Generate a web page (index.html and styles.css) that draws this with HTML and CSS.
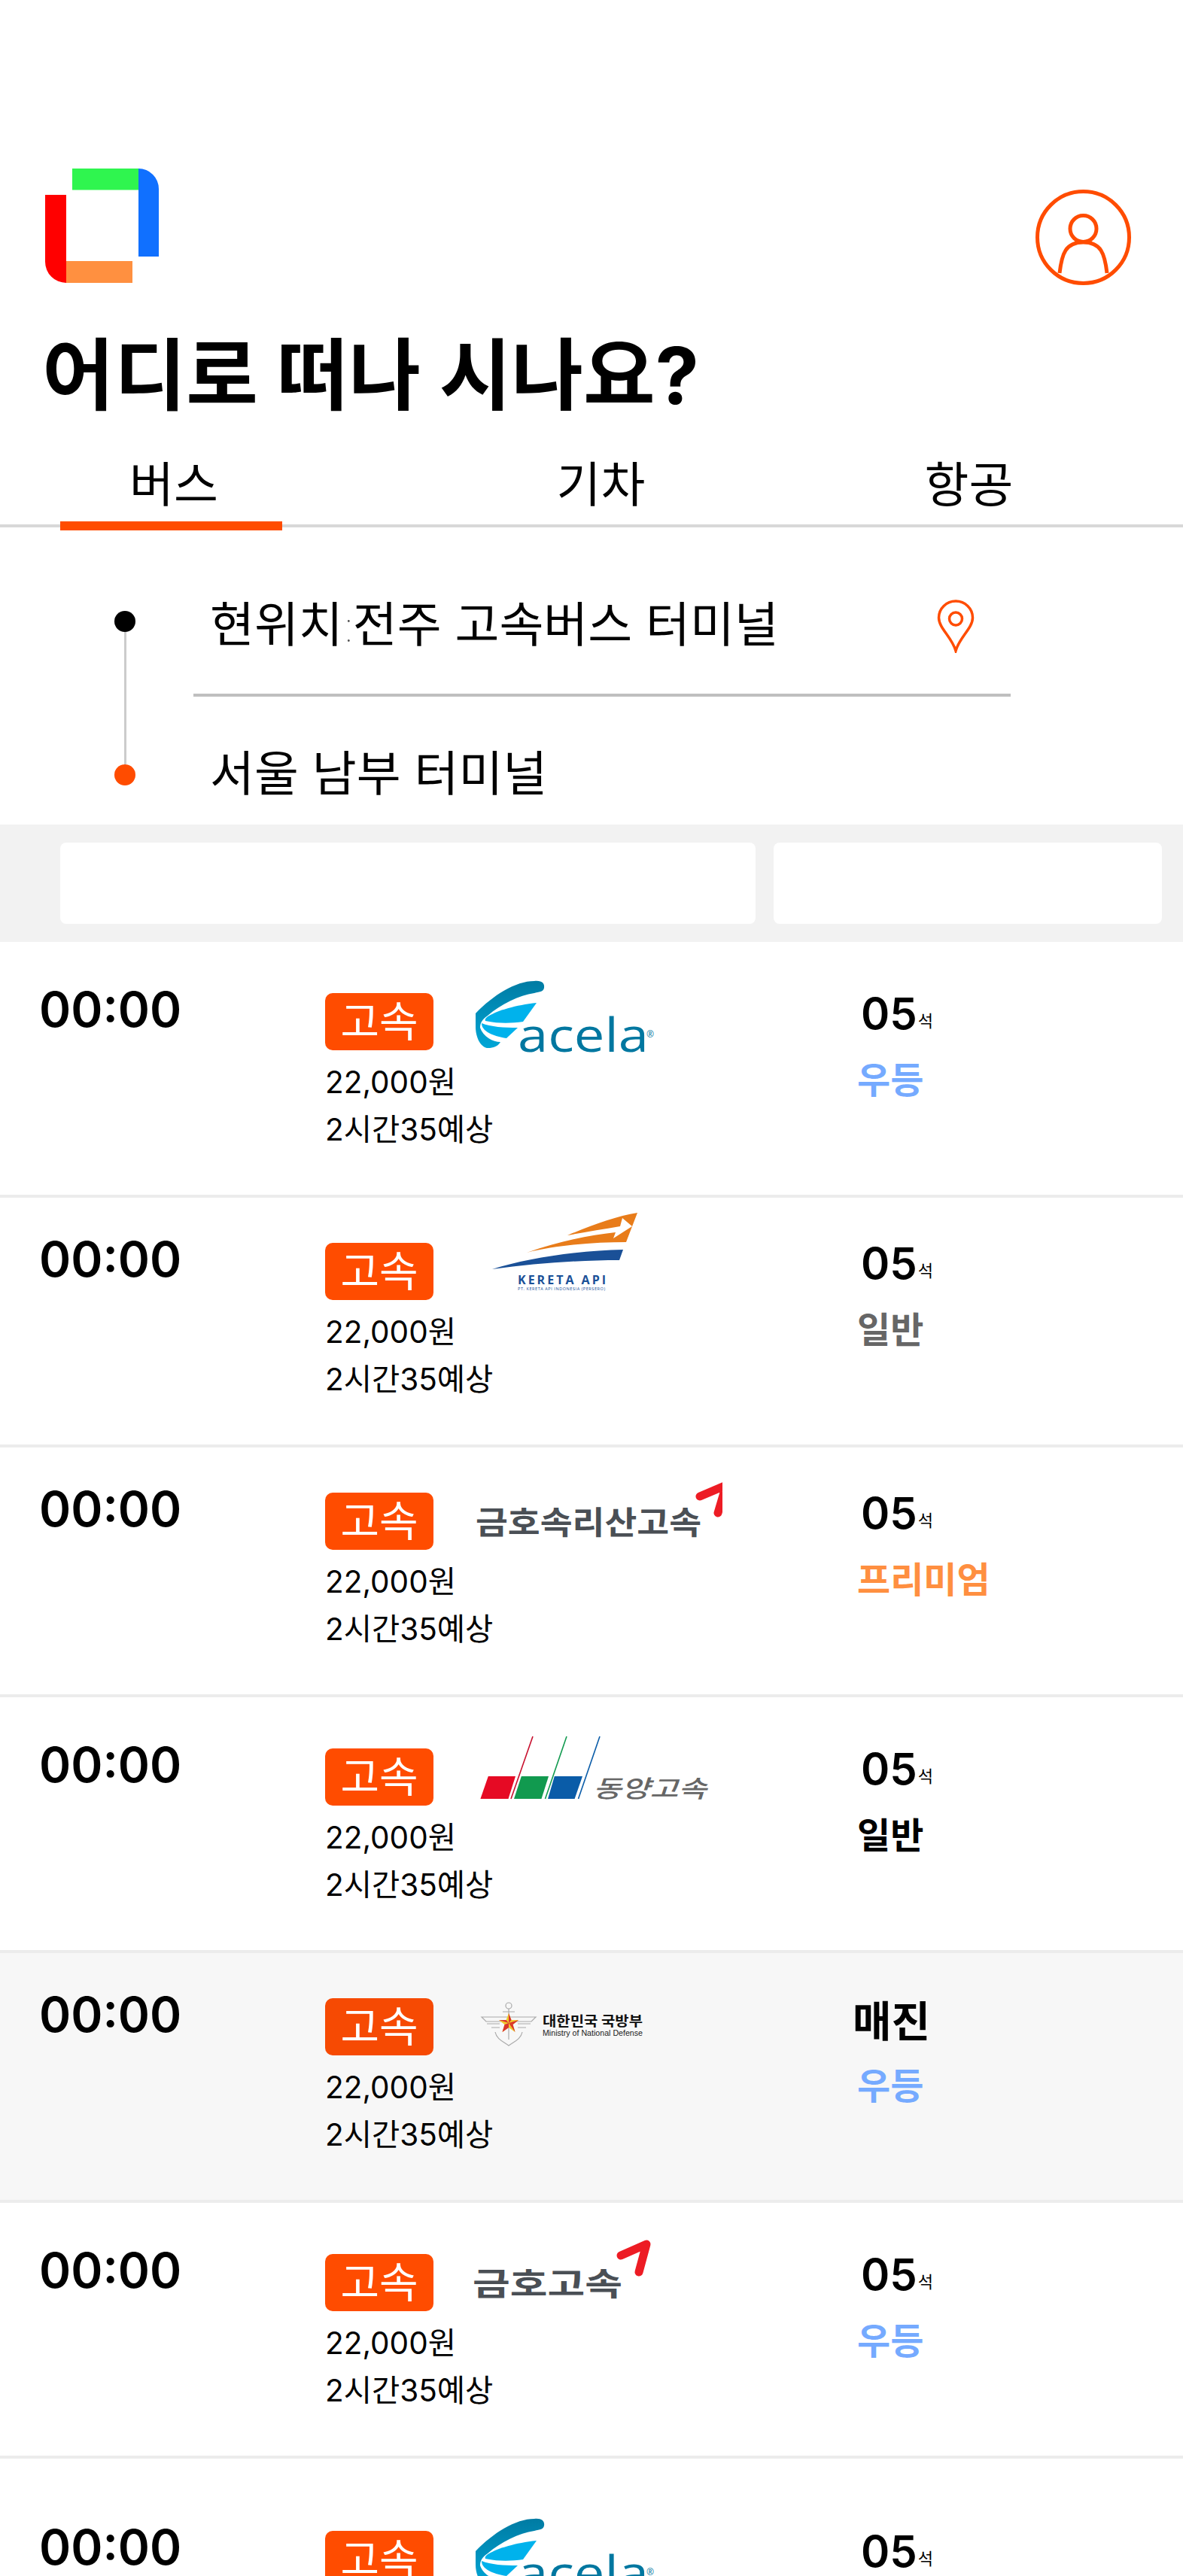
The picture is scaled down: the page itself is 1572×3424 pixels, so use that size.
FILE: index.html
```html
<!DOCTYPE html>
<html lang="ko">

<head>
  <meta charset="UTF-8" />
  <title>어디로 떠나 시나요?</title>
  <link rel="stylesheet" href="styles.css">
</head>

<body>
  <svg class="defs" width="0" height="0">
    <defs>
      <linearGradient id="wingGrad" x1="0" y1="0" x2="0" y2="1">
        <stop offset="0" stop-color="#007ba3" />
        <stop offset="1" stop-color="#00a6d6" />
      </linearGradient>
      <g id="acela">
        <path fill="url(#wingGrad)" d="M12 72 C35 48 65 29 90 29 C100 28 104 32 103 38 C102 43 98 43 90 45 C70 48 45 60 28 75 C20 80 18 86 18 91 C22 103 35 110 45 110 C40 118 32 118 27 118 C18 116 12 103 12 90 Z" />
        <path fill="#00b2ec" d="M93 58 C65 61 42 68 30 75 C25 78 24 80 25 82 C45 86 60 85 75 83 Z" />
        <path fill="#00b2ec" d="M68 91 C50 91 32 90 20 85 C20 96 35 102 53 105 Z" />
        <text class="logo-acela" x="68" y="123" textLength="174" lengthAdjust="spacingAndGlyphs">acela</text>
        <text class="logo-acela-r" x="239" y="104">®</text>
      </g>
    </defs>
  </svg>

  <header class="top">
    <svg class="brand" viewBox="0 0 151 152">
      <rect x="36" y="0" width="88" height="28.5" fill="#2ff54f" />
      <path d="M124 0 A27 27 0 0 1 151 27 V117 H124 Z" fill="#1070ff" />
      <path d="M0 35 H28 V152 A28 28 0 0 1 0 124 Z" fill="#ff0000" />
      <rect x="28" y="123" width="88" height="29" fill="#ff9040" />
    </svg>
    <svg class="avatar" viewBox="0 0 127 127" fill="none" stroke="#ff4c00">
      <circle cx="63.5" cy="63.5" r="61" stroke-width="5" />
      <circle cx="63.5" cy="52" r="17.5" stroke-width="5" />
      <path d="M32 111 C35 85 40 70 63.5 70 C87 70 92 85 95 111" stroke-width="5" />
    </svg>
  </header>

  <h1 class="title">어디로 떠나 시나요?</h1>

  <nav class="tabs">
    <a class="tab tab-on">버스</a>
    <a class="tab tab-train">기차</a>
    <a class="tab tab-air">항공</a>
  </nav>

  <section class="route">
    <div class="route-line">
      <span class="dot"></span>
      <span class="line"></span>
      <span class="dot dot-end"></span>
    </div>
    <div class="route-fields">
      <div class="field field-from">
        <span>현위치<span class="sep">:</span>전주 고속버스 터미널</span>
        <svg class="pin" viewBox="0 0 50 71" fill="none" stroke="#ff4c00" stroke-width="3.5">
          <path d="M25 68 C20 50 2.5 38 2.5 24 A22.5 22 0 0 1 47.5 24 C47.5 38 30 50 25 68 Z" />
          <circle cx="25" cy="25.5" r="8.5" />
        </svg>
      </div>
      <div class="field field-to">서울 남부 터미널</div>
    </div>
  </section>

  <section class="filters">
    <div class="filter filter-wide"></div>
    <div class="filter filter-narrow"></div>
  </section>

  <main class="list">

    <article class="row row-tall">
      <div class="time">00:00</div>
      <div class="mid">
        <div class="mid-top">
          <span class="badge">고속</span>
          <svg class="logo" viewBox="0 0 340 166"><use href="#acela" /></svg>
        </div>
        <div class="info">22,000원</div>
        <div class="info">2시간35예상</div>
      </div>
      <div class="side">
        <div class="seats">05<small>석</small></div>
        <div class="grade grade-blue">우등</div>
      </div>
    </article>

    <article class="row">
      <div class="time">00:00</div>
      <div class="mid">
        <div class="mid-top">
          <span class="badge">고속</span>
          <svg class="logo" viewBox="0 0 340 166">
            <path fill="#e87c1a" d="M134 35 C165 22 200 9 227 5 L212 44 C170 44 120 48 80 58 C120 44 160 35 198 31 L195 39 L220 23 L207 12 L204 23 C180 27 155 31 134 35 Z" />
            <path fill="#1a5097" d="M208 54 C150 55 80 65 34 80 C90 72 150 68 203 68 Z" />
            <text class="logo-kereta" x="68" y="100" textLength="117">KERETA API</text>
            <text class="logo-kereta-sub" x="68" y="108" textLength="116">PT. KERETA API INDONESIA (PERSERO)</text>
          </svg>
        </div>
        <div class="info">22,000원</div>
        <div class="info">2시간35예상</div>
      </div>
      <div class="side">
        <div class="seats">05<small>석</small></div>
        <div class="grade grade-gray">일반</div>
      </div>
    </article>

    <article class="row">
      <div class="time">00:00</div>
      <div class="mid">
        <div class="mid-top">
          <span class="badge">고속</span>
          <svg class="logo" viewBox="0 0 340 166">
            <text class="logo-kumho" x="12" y="100" textLength="300" lengthAdjust="spacingAndGlyphs">금호속리산고속</text>
            <path class="logo-arrow" d="M310 50 L345 35 L334 72" />
          </svg>
        </div>
        <div class="info">22,000원</div>
        <div class="info">2시간35예상</div>
      </div>
      <div class="side">
        <div class="seats">05<small>석</small></div>
        <div class="grade grade-orange">프리미엄</div>
      </div>
    </article>

    <article class="row row-tall">
      <div class="time">00:00</div>
      <div class="mid">
        <div class="mid-top">
          <span class="badge">고속</span>
          <svg class="logo" viewBox="0 0 340 166">
            <polygon fill="#e60a24" points="28.8,82 65,82 55.5,112 18.4,112" />
            <polygon fill="#119a4f" points="72.8,82 109,82 99.5,112 63,112" />
            <polygon fill="#0a5ca8" points="116.8,82 154,82 143.6,112 108,112" />
            <line x1="88" y1="29" x2="59" y2="112" stroke="#c8102e" stroke-width="1.6" />
            <line x1="133" y1="29" x2="104.5" y2="112" stroke="#119a4f" stroke-width="1.6" />
            <line x1="177" y1="29" x2="148.5" y2="112" stroke="#0a5ca8" stroke-width="1.6" />
            <text class="logo-dongyang" x="168" y="110" textLength="151" lengthAdjust="spacingAndGlyphs">동양고속</text>
          </svg>
        </div>
        <div class="info">22,000원</div>
        <div class="info">2시간35예상</div>
      </div>
      <div class="side">
        <div class="seats">05<small>석</small></div>
        <div class="grade">일반</div>
      </div>
    </article>

    <article class="row row-sold">
      <div class="time">00:00</div>
      <div class="mid">
        <div class="mid-top">
          <span class="badge">고속</span>
          <svg class="logo" viewBox="0 0 340 166">
            <g fill="none" stroke="#aaa" stroke-width="1.2">
              <circle cx="56" cy="55" r="4" />
              <path d="M56 59 V100 M48 63 H64 M38 90 C40 100 50 103 56 108 C62 103 72 100 74 90" />
              <path d="M20 70 H92 L86 76 H26 Z M27 79 H44 M85 79 H68 M33 84 H44 M79 84 H68" />
            </g>
            <polygon fill="#f0c92c" points="56,65 59.5,74 69,74 61.5,80 64.5,90 56,84 47.5,90 50.5,80 43,74 52.5,74" />
            <polygon fill="#d9342b" points="56,65 59.5,74 56,78" />
            <polygon fill="#d9342b" points="56,78 69,74 61.5,80" />
            <polygon fill="#d9342b" points="56,78 61.5,80 64.5,90" />
            <polygon fill="#d9342b" points="56,78 56,84 47.5,90 50.5,80" />
            <polygon fill="#d9342b" points="56,78 43,74 52.5,74" />
            <text class="logo-mnd" x="101" y="82" textLength="133" lengthAdjust="spacingAndGlyphs">대한민국 국방부</text>
            <text class="logo-mnd-en" x="101" y="95" textLength="133" lengthAdjust="spacingAndGlyphs">Ministry of National Defense</text>
          </svg>
        </div>
        <div class="info">22,000원</div>
        <div class="info">2시간35예상</div>
      </div>
      <div class="side">
        <div class="sold">매진</div>
        <div class="grade grade-blue">우등</div>
      </div>
    </article>

    <article class="row row-tall">
      <div class="time">00:00</div>
      <div class="mid">
        <div class="mid-top">
          <span class="badge">고속</span>
          <svg class="logo" viewBox="0 0 340 166">
            <text class="logo-kumho" x="8" y="100" textLength="199" lengthAdjust="spacingAndGlyphs">금호고속</text>
            <path class="logo-arrow" d="M205 47 L239 32 L229 69" />
          </svg>
        </div>
        <div class="info">22,000원</div>
        <div class="info">2시간35예상</div>
      </div>
      <div class="side">
        <div class="seats">05<small>석</small></div>
        <div class="grade grade-blue">우등</div>
      </div>
    </article>

    <article class="row row-last">
      <div class="time">00:00</div>
      <div class="mid">
        <div class="mid-top">
          <span class="badge">고속</span>
          <svg class="logo" viewBox="0 0 340 166"><use href="#acela" /></svg>
        </div>
      </div>
      <div class="side">
        <div class="seats">05<small>석</small></div>
      </div>
    </article>

  </main>
</body>

</html>
```

FILE: styles.css
```css
* {
  box-sizing: border-box;
}

html,
body {
  height: 3424px;
  overflow: hidden;
}

body {
  margin: 0;
  background-color: #ffffff;
  color: #000000;
  font-family: Inter, "Noto Sans CJK KR", sans-serif;
}

.defs {
  display: block;
  height: 0;
}

/* header */
.top {
  display: flex;
  justify-content: space-between;
  align-items: flex-start;
  padding: 224px 69px 0 60px;
}

.brand {
  width: 151px;
  height: 152px;
}

.avatar {
  width: 127px;
  height: 127px;
  margin-top: 28px;
}

.title {
  margin: 60px 0 0 56px;
  font-size: 104px;
  font-weight: 700;
  line-height: 120px;
}

/* tabs */
.tabs {
  display: flex;
  height: 142px;
  padding: 45px 0 0 80px;
  border-bottom: 4px solid #d8d8d8;
}

.tab {
  position: relative;
  width: 295px;
  height: 80px;
  font-size: 64px;
  line-height: 80px;
  text-align: center;
}

.tab-on {
  padding-left: 7px;
}

.tab-on::after {
  content: "";
  position: absolute;
  left: 0;
  right: 0;
  top: 89px;
  height: 12px;
  background-color: #ff4c00;
}

.tab-train {
  margin-left: 276px;
}

.tab-air {
  margin-left: 194px;
}

/* route */
.route {
  display: flex;
  height: 395px;
  padding-left: 152px;
}

.route-line {
  display: flex;
  flex-direction: column;
  align-items: center;
  width: 28px;
  padding-top: 111px;
}

.dot {
  width: 28px;
  height: 28px;
  border-radius: 50%;
  background-color: #000000;
}

.dot-end {
  background-color: #ff4c00;
}

.line {
  width: 3px;
  height: 176px;
  background-color: #cccccc;
}

.route-fields {
  width: 1086px;
  margin-left: 77px;
  font-size: 64px;
  line-height: 80px;
}

.field {
  padding-left: 22px;
}

.field-from {
  display: flex;
  justify-content: space-between;
  align-items: center;
  height: 225px;
  padding: 90px 48px 51px 22px;
  border-bottom: 4px solid #bfbfbf;
}

.field-to {
  margin-top: 62px;
}

.sep {
  margin-right: -2px;
  font-size: 56px;
  font-weight: 100;
  color: #555555;
}

.pin {
  width: 50px;
  height: 71px;
  margin-top: 2px;
}

/* filters */
.filters {
  display: flex;
  gap: 24px;
  height: 156px;
  padding: 24px 28px 24px 80px;
  background-color: #f2f2f2;
}

.filter {
  border-radius: 8px;
  background-color: #ffffff;
}

.filter-wide {
  width: 924px;
}

.filter-narrow {
  width: 516px;
}

/* rows */
.row {
  display: grid;
  grid-template-columns: 432px 704px 1fr;
  height: 332px;
  padding-top: 60px;
  border-bottom: 4px solid #ececec;
}

.row-tall {
  height: 340px;
  padding-top: 68px;
}

.row-last {
  height: 156px;
  padding-top: 96px;
  border-bottom: none;
  overflow: hidden;
}

.row-sold {
  background-color: #f7f7f7;
}

.row-sold .badge {
  background-color: #f64a03;
}

.time {
  margin-top: -10px;
  padding-left: 52px;
  font-size: 64px;
  font-weight: 600;
  line-height: 64px;
}

.mid-top {
  display: flex;
  align-items: center;
  margin-bottom: 11px;
}

.badge {
  display: flex;
  justify-content: center;
  align-items: center;
  width: 144px;
  height: 76px;
  border-radius: 10px;
  background-color: #ff4c00;
  color: #ffffff;
  font-size: 56px;
  line-height: 76px;
}

.logo {
  width: 340px;
  height: 166px;
  margin: -45px 0 -45px 44px;
}

.info {
  height: 63px;
  font-size: 40.5px;
  line-height: 63px;
}

.seats {
  margin-top: -5px;
  padding-left: 8px;
  font-size: 58px;
  font-weight: 600;
  line-height: 64px;
}

.seats small {
  margin-left: 1px;
  font-size: 22px;
  font-weight: 400;
  vertical-align: 3px;
}

.sold {
  margin-top: -1px;
  margin-left: -3px;
  font-size: 56px;
  font-weight: 700;
  line-height: 64px;
}

.grade {
  margin-top: 17px;
  padding-left: 3px;
  font-size: 48px;
  font-weight: 700;
  line-height: 60px;
}

.row-sold .grade {
  margin-top: 24px;
}

.grade-blue {
  color: #75aaff;
}

.grade-gray {
  color: #666666;
}

.grade-orange {
  color: #ff8f40;
}

/* text inside the operator logos */
.logo-acela {
  font-family: "Open Sans", sans-serif;
  font-size: 62px;
  fill: #0077a0;
}

.logo-acela-r {
  font-family: "Open Sans", sans-serif;
  font-size: 12px;
  fill: #0077a0;
}

.logo-kereta {
  font-family: "Open Sans", sans-serif;
  font-size: 16px;
  font-weight: 700;
  fill: #1a5097;
}

.logo-kereta-sub {
  font-family: "Open Sans", sans-serif;
  font-size: 5.5px;
  fill: #1a5097;
}

.logo-kumho {
  font-size: 42px;
  font-weight: 700;
  fill: #4a4f55;
}

.logo-arrow {
  fill: none;
  stroke: #ed1c24;
  stroke-width: 11;
  stroke-linecap: round;
  stroke-linejoin: round;
}

.logo-dongyang {
  font-size: 32px;
  font-style: italic;
  font-weight: 500;
  fill: #666666;
}

.logo-mnd {
  font-size: 18px;
  font-weight: 700;
  fill: #111111;
}

.logo-mnd-en {
  font-family: "Liberation Sans", sans-serif;
  font-size: 10.5px;
  fill: #222222;
}
```
